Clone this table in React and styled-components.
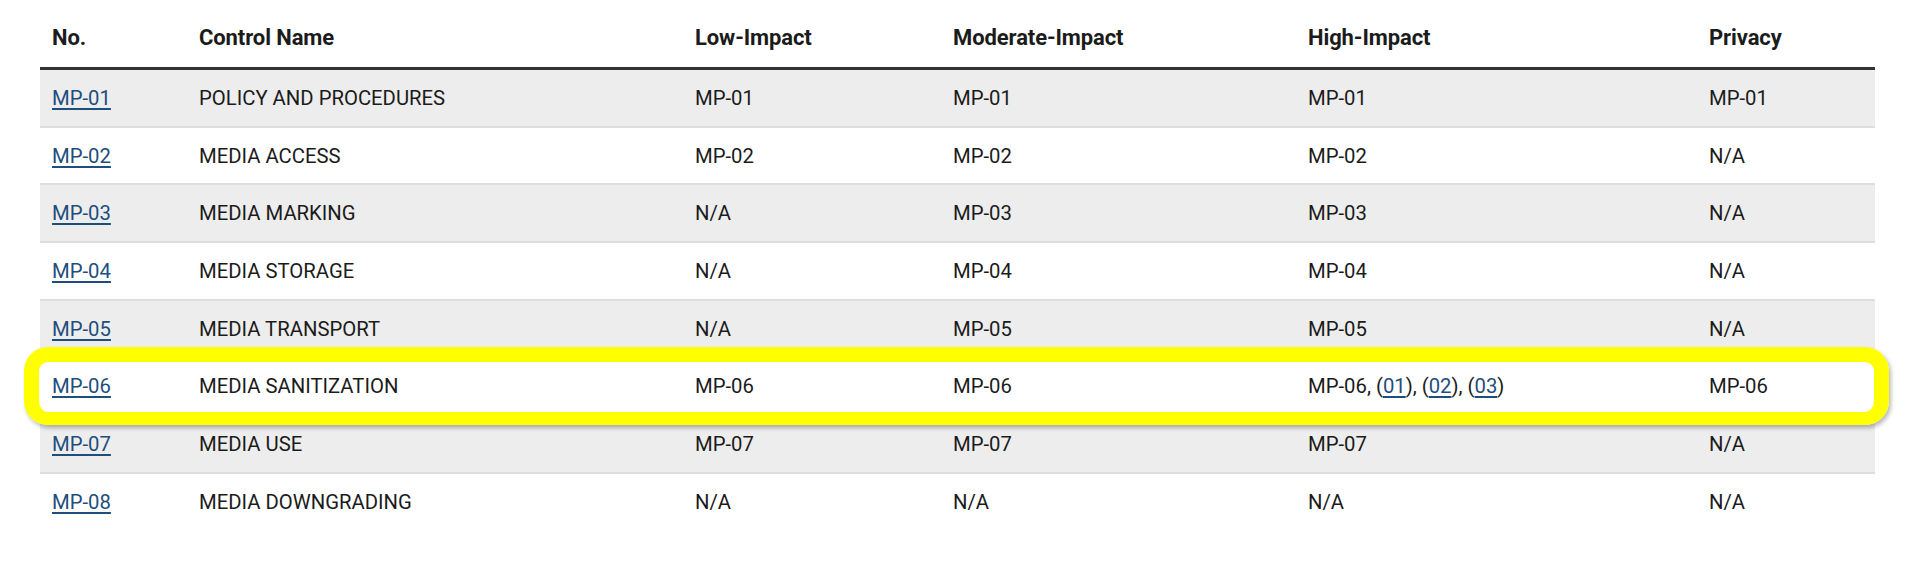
import React from 'react';
import styled, { createGlobalStyle } from 'styled-components';

const GlobalStyle = createGlobalStyle`
  html, body {
    margin: 0;
    background: #ffffff;
  }
  body {
    font-family: Roboto, "Liberation Sans", Arial, sans-serif;
    color: #1b1b1b;
  }
`;

const Page = styled.div`
  padding: 8px 45px 0 40px;
`;

const Table = styled.table`
  width: 1835px;
  border-collapse: separate;
  border-spacing: 0;
  table-layout: fixed;
  font-size: 20.3px;
`;

const HeadCell = styled.th`
  height: 59px;
  padding: 0 12px;
  text-align: left;
  vertical-align: middle;
  font-weight: 700;
  font-size: 22px;
  letter-spacing: -0.1px;
  color: #1b1b1b;
  border-bottom: 3px solid #333333;
`;

const Row = styled.tr`
  position: relative;
  background: ${(p) => (p.$striped ? '#ededed' : '#ffffff')};
`;

const Cell = styled.td`
  height: 55.7px;
  padding: 0 12px;
  vertical-align: middle;
  border-bottom: 2px solid ${(p) => (p.$last ? 'transparent' : '#dedede')};
  white-space: nowrap;
`;

const Link = styled.a`
  color: #1d4e7c;
  text-decoration: underline;
  text-decoration-thickness: 1.5px;
  text-underline-offset: 3px;
  cursor: pointer;
`;

// yellow annotation drawn round the highlighted row
const Highlight = styled.div`
  position: absolute;
  z-index: 1;
  top: -11px;
  bottom: -9px;
  left: -16px;
  right: -14px;
  border: 15px solid #ffff00;
  border-bottom-width: 13px;
  border-radius: 24px;
  box-shadow: 2px 3px 4px rgba(0, 0, 0, 0.28);
  pointer-events: none;
`;

const columns = [
  { key: 'no', label: 'No.', width: 147 },
  { key: 'name', label: 'Control Name', width: 496 },
  { key: 'low', label: 'Low-Impact', width: 258 },
  { key: 'moderate', label: 'Moderate-Impact', width: 355 },
  { key: 'high', label: 'High-Impact', width: 401 },
  { key: 'privacy', label: 'Privacy', width: 178 },
];

const rows = [
  { no: 'MP-01', name: 'POLICY AND PROCEDURES', low: 'MP-01', moderate: 'MP-01', high: 'MP-01', privacy: 'MP-01' },
  { no: 'MP-02', name: 'MEDIA ACCESS', low: 'MP-02', moderate: 'MP-02', high: 'MP-02', privacy: 'N/A' },
  { no: 'MP-03', name: 'MEDIA MARKING', low: 'N/A', moderate: 'MP-03', high: 'MP-03', privacy: 'N/A' },
  { no: 'MP-04', name: 'MEDIA STORAGE', low: 'N/A', moderate: 'MP-04', high: 'MP-04', privacy: 'N/A' },
  { no: 'MP-05', name: 'MEDIA TRANSPORT', low: 'N/A', moderate: 'MP-05', high: 'MP-05', privacy: 'N/A' },
  {
    no: 'MP-06',
    name: 'MEDIA SANITIZATION',
    low: 'MP-06',
    moderate: 'MP-06',
    high: 'MP-06',
    enhancements: ['01', '02', '03'],
    privacy: 'MP-06',
    highlighted: true,
  },
  { no: 'MP-07', name: 'MEDIA USE', low: 'MP-07', moderate: 'MP-07', high: 'MP-07', privacy: 'N/A' },
  { no: 'MP-08', name: 'MEDIA DOWNGRADING', low: 'N/A', moderate: 'N/A', high: 'N/A', privacy: 'N/A' },
];

const HighValue = ({ row }) => {
  if (!row.enhancements) return row.high;
  return (
    <>
      {row.high}
      {row.enhancements.map((e) => (
        <React.Fragment key={e}>
          , (<Link>{e}</Link>)
        </React.Fragment>
      ))}
    </>
  );
};

const App = () => (
  <Page>
    <GlobalStyle />
    <Table>
      <colgroup>
        {columns.map((c) => (
          <col key={c.key} style={{ width: c.width }} />
        ))}
      </colgroup>
      <thead>
        <tr>
          {columns.map((c) => (
            <HeadCell key={c.key}>{c.label}</HeadCell>
          ))}
        </tr>
      </thead>
      <tbody>
        {rows.map((row, i) => {
          const last = i === rows.length - 1;
          return (
            <Row key={row.no} $striped={i % 2 === 0 && !row.highlighted}>
              <Cell $last={last}>
                <Link>{row.no}</Link>
                {row.highlighted && <Highlight />}
              </Cell>
              <Cell $last={last}>{row.name}</Cell>
              <Cell $last={last}>{row.low}</Cell>
              <Cell $last={last}>{row.moderate}</Cell>
              <Cell $last={last}>
                <HighValue row={row} />
              </Cell>
              <Cell $last={last}>{row.privacy}</Cell>
            </Row>
          );
        })}
      </tbody>
    </Table>
  </Page>
);

export default App;
